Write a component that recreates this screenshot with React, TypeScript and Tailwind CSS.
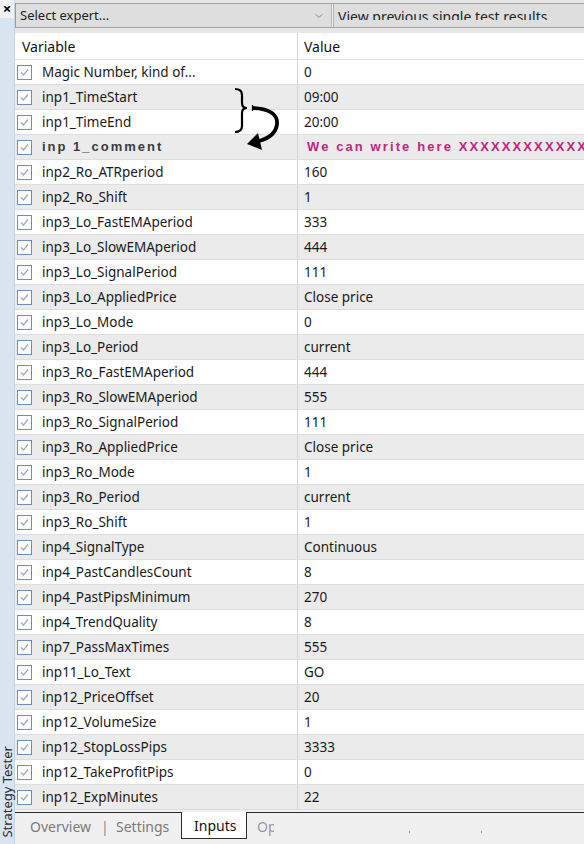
import { ChevronDown } from 'lucide-react';

type Row = { name: string; value: string; special?: boolean };

const ROWS: Row[] = [
  { name: 'Magic Number, kind of...', value: '0' },
  { name: 'inp1_TimeStart', value: '09:00' },
  { name: 'inp1_TimeEnd', value: '20:00' },
  { name: 'inp 1_comment', value: 'We can write here XXXXXXXXXXXX', special: true },
  { name: 'inp2_Ro_ATRperiod', value: '160' },
  { name: 'inp2_Ro_Shift', value: '1' },
  { name: 'inp3_Lo_FastEMAperiod', value: '333' },
  { name: 'inp3_Lo_SlowEMAperiod', value: '444' },
  { name: 'inp3_Lo_SignalPeriod', value: '111' },
  { name: 'inp3_Lo_AppliedPrice', value: 'Close price' },
  { name: 'inp3_Lo_Mode', value: '0' },
  { name: 'inp3_Lo_Period', value: 'current' },
  { name: 'inp3_Ro_FastEMAperiod', value: '444' },
  { name: 'inp3_Ro_SlowEMAperiod', value: '555' },
  { name: 'inp3_Ro_SignalPeriod', value: '111' },
  { name: 'inp3_Ro_AppliedPrice', value: 'Close price' },
  { name: 'inp3_Ro_Mode', value: '1' },
  { name: 'inp3_Ro_Period', value: 'current' },
  { name: 'inp3_Ro_Shift', value: '1' },
  { name: 'inp4_SignalType', value: 'Continuous' },
  { name: 'inp4_PastCandlesCount', value: '8' },
  { name: 'inp4_PastPipsMinimum', value: '270' },
  { name: 'inp4_TrendQuality', value: '8' },
  { name: 'inp7_PassMaxTimes', value: '555' },
  { name: 'inp11_Lo_Text', value: 'GO' },
  { name: 'inp12_PriceOffset', value: '20' },
  { name: 'inp12_VolumeSize', value: '1' },
  { name: 'inp12_StopLossPips', value: '3333' },
  { name: 'inp12_TakeProfitPips', value: '0' },
  { name: 'inp12_ExpMinutes', value: '22' },
];

function Check() {
  return (
    <div className="flex h-[15px] w-[15px] shrink-0 items-center justify-center border border-[#6f8fb8] bg-white">
      <svg width="11" height="11" viewBox="0 0 11 11">
        <path d="M2 5.5 L4.5 8 L9 2.5" fill="none" stroke="#a8a8a8" strokeWidth="1.3" />
      </svg>
    </div>
  );
}

function InputRow({ row, index }: { row: Row; index: number }) {
  const bg = index % 2 ? 'bg-[#ebebeb]' : 'bg-white';
  return (
    <div className={`flex h-[25px] border-b border-[#dedede] ${bg}`}>
      <div className="flex w-[283px] shrink-0 items-center gap-[10px] border-r border-[#d6d6d6] pl-[2px]">
        <Check />
        {row.special ? (
          <span className="font-['Liberation_Sans'] text-[13px] font-bold tracking-[2px] text-[#3a3a3a]">{row.name}</span>
        ) : (
          <span className="whitespace-nowrap text-[13.5px] text-[#1a1a1a]">{row.name}</span>
        )}
      </div>
      <div className="flex flex-1 items-center overflow-hidden whitespace-nowrap pl-[6px]">
        {row.special ? (
          <span className="pl-[3px] font-['Liberation_Sans'] text-[13px] font-bold tracking-[2.1px] text-[#c0267f]">{row.value}</span>
        ) : (
          <span className="text-[13.5px] text-[#1a1a1a]">{row.value}</span>
        )}
      </div>
    </div>
  );
}

export default function App() {
  return (
    <div className="relative flex h-[844px] w-[584px] overflow-hidden bg-white font-['Noto_Sans',sans-serif]">
      {/* side strip */}
      <aside className="flex w-[15px] shrink-0 flex-col justify-between border-r border-[#c5d2e2] bg-[#d9e4f1]">
        <div className="flex h-[18px] items-start justify-center bg-[#f2f2f2] text-[15px] font-bold leading-[17px] text-black">×</div>
        <div className="mb-[6px] flex justify-center">
          <span className="rotate-180 whitespace-nowrap text-[13px] leading-[14px] text-[#2a2a2a] [writing-mode:vertical-rl]">
            Strategy Tester
          </span>
        </div>
      </aside>

      <main className="flex flex-1 flex-col">
        {/* top selectors */}
        <div className="h-[33px] bg-[#e6e6e6] pt-[3px]">
          <div className="flex h-[25px] border-y border-[#a3a3a3] bg-[#dedede]">
            <div className="flex w-[316px] items-center justify-between border-l border-[#9a9a9a] pl-[4px] pr-[6px]">
              <span className="text-[13px] text-[#222]">Select expert...</span>
              <ChevronDown size={12} strokeWidth={1.3} color="#555" />
            </div>
            <div className="w-[3px] border-x border-[#b5b5b5] bg-[#f0f0f0]" />
            <div className="h-[16px] flex-1 overflow-hidden pl-[4px]">
              <span className="block pt-[5px] text-[14px] leading-[16px] text-[#222]">View previous single test results</span>
            </div>
          </div>
        </div>

        {/* header */}
        <div className="flex h-[27px] border-b border-[#e4e4e4] bg-white">
          <div className="flex w-[283px] shrink-0 items-center border-r border-[#d6d6d6] pl-[7px] text-[14px] text-[#111]">Variable</div>
          <div className="flex flex-1 items-center pl-[6px] text-[14px] text-[#111]">Value</div>
        </div>

        {/* rows */}
        <div className="flex flex-col">
          {ROWS.map((row, i) => (
            <InputRow key={row.name} row={row} index={i} />
          ))}
        </div>

        {/* tabs */}
        <div className="flex-1 bg-[#f0f0f0] pt-[2px]">
          <div className="flex h-[27px]">
            <div className="flex w-[166px] items-center border-t border-[#2b2b2b] pl-[15px] text-[14px] text-[#7a7a7a]">
              <span className="w-[71px]">Overview</span>
              <span className="w-[15px] text-[#8a8a8a]">|</span>
              <span>Settings</span>
            </div>
            <div className="flex w-[66px] items-center border-x border-b border-[#2b2b2b] bg-white pl-[12px] text-[14px] text-[#111]">
              Inputs
            </div>
            <div className="relative flex flex-1 items-center border-t border-[#2b2b2b] pl-[10px] text-[14px] text-[#9a9a9a]">
              <span className="w-[17px] overflow-hidden whitespace-nowrap">Op</span>
              <span className="absolute left-[162px] top-[18px] h-[2px] w-[1px] bg-[#9a9a9a]" />
              <span className="absolute left-[234px] top-[18px] h-[2px] w-[1px] bg-[#9a9a9a]" />
            </div>
          </div>
        </div>
      </main>

      {/* hand-drawn brace and arrow annotation */}
      <svg className="absolute left-[228px] top-[82px]" width="60" height="72" viewBox="0 0 60 72">
        <path
          d="M7 7 C12 7 14 9 14 13 L14 21 C14 24 16 26 19 26 C16 26 14 28 14 31 L14 44 C14 48 12 50 7 50"
          fill="none"
          stroke="#000"
          strokeWidth="2.2"
        />
        <path d="M24 26 C40 26 50 32 49 42 C48 51 42 56 31 59" fill="none" stroke="#000" strokeWidth="3.8" />
        <line x1="24.5" y1="23" x2="24.5" y2="29" stroke="#000" strokeWidth="1.2" />
        <polygon points="19,62 30,51 34,68" fill="#000" />
      </svg>
    </div>
  );
}
